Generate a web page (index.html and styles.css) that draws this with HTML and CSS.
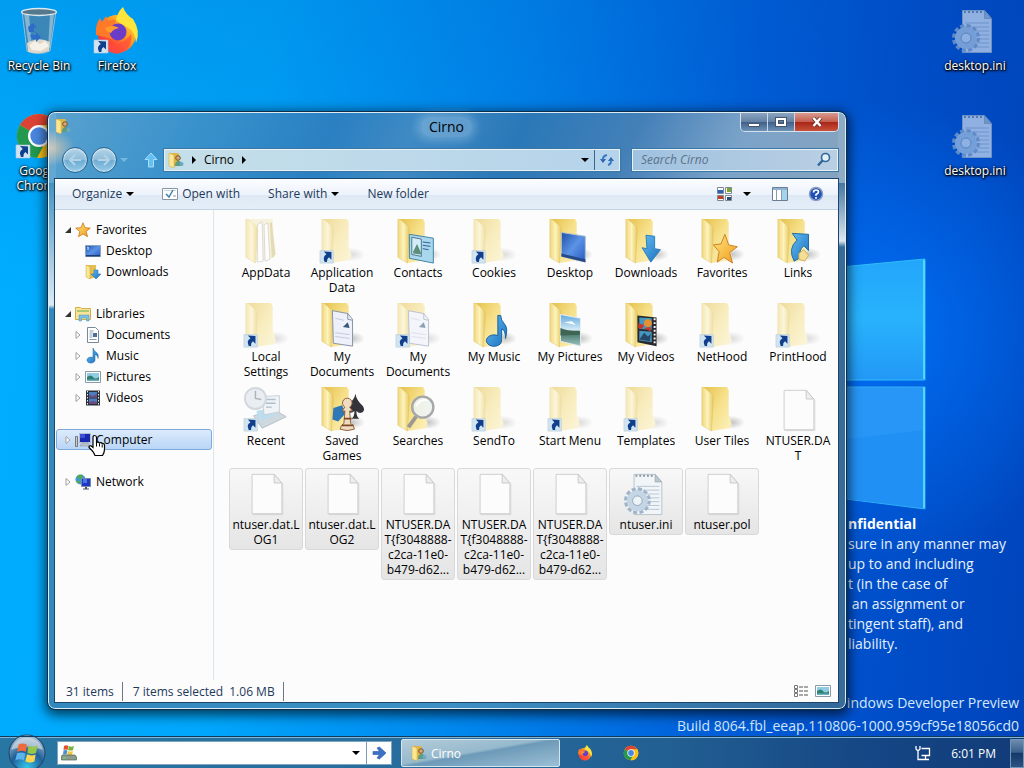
FILE: index.html
```html
<!DOCTYPE html>
<html lang="en">
<head>
    <meta charset="UTF-8">
    <meta name="viewport" content="width=device-width, initial-scale=1.0">
    <title>Cirno</title>
    <link rel="stylesheet" href="styles.css">
</head>
<body>
    <!-- Icon sprite -->
    <svg class="sprite" aria-hidden="true">
        <defs>
            <linearGradient id="flap" x1="0" y1="0" x2="1" y2="0">
                <stop offset="0" stop-color="#f0d67c"/><stop offset=".5" stop-color="#fdf3bd"/><stop offset="1" stop-color="#e6c75e"/>
            </linearGradient>
            <linearGradient id="back" x1="0" y1="0" x2="1" y2="1">
                <stop offset="0" stop-color="#e6c24e"/><stop offset=".5" stop-color="#f6e08a"/><stop offset="1" stop-color="#fbf0b8"/>
            </linearGradient>
            <linearGradient id="blue" x1="0" y1="0" x2="1" y2="1">
                <stop offset="0" stop-color="#63bdf0"/><stop offset="1" stop-color="#1a6fc0"/>
            </linearGradient>
            <linearGradient id="screen" x1="0" y1="0" x2="1" y2="1">
                <stop offset="0" stop-color="#1f4fa8"/><stop offset=".5" stop-color="#5b93e6"/><stop offset="1" stop-color="#2a5ac0"/>
            </linearGradient>
            <linearGradient id="gold" x1="0" y1="0" x2="1" y2="1">
                <stop offset="0" stop-color="#ffe680"/><stop offset="1" stop-color="#f09a1a"/>
            </linearGradient>
            <linearGradient id="sky" x1="0" y1="0" x2="0" y2="1">
                <stop offset="0" stop-color="#5fa8e0"/><stop offset=".5" stop-color="#d8ecf6"/><stop offset=".55" stop-color="#3f7060"/><stop offset="1" stop-color="#9cc4c4"/>
            </linearGradient>
            <linearGradient id="fox" x1="1" y1="0" x2="0" y2="1">
                <stop offset="0" stop-color="#fff04a"/><stop offset=".4" stop-color="#ff9a22"/><stop offset=".7" stop-color="#ff4434"/><stop offset="1" stop-color="#e01a70"/>
            </linearGradient>
            <radialGradient id="shade">
                <stop offset="0" stop-color="#888" stop-opacity=".5"/><stop offset="1" stop-color="#888" stop-opacity="0"/>
            </radialGradient>
            <radialGradient id="orb" cx=".5" cy=".9" r=".9">
                <stop offset="0" stop-color="#35c6e8"/><stop offset=".5" stop-color="#1f5f9a"/><stop offset="1" stop-color="#b8c8d4"/>
            </radialGradient>
        </defs>
        <symbol id="folder" viewBox="0 0 48 48">
            <ellipse cx="34" cy="37" rx="14" ry="7" fill="url(#shade)"/>
            <path d="M5 0h24l2 3v40l-18 3z" fill="url(#back)"/>
            <path d="M30 24l4 14-1 4-3 1z" fill="#faeeb4"/>
            <path d="M3 0h2l9 8 1 4-2 34-10-6z" fill="url(#flap)" stroke="#dcbf5c" stroke-width=".5"/>
        </symbol>
        <symbol id="folder-files" viewBox="0 0 48 48">
            <path d="M5 0h26l2 40-19 5z" fill="#f4eac2"/>
            <path d="M15 6l5-3 1 41-6 1zM22 6l4-2 2 38-5 2z" fill="#fff" stroke="#b4b0a4" stroke-width=".8"/>
            <path d="M28 4l2-1 4 34-4 4z" fill="#d2c078"/>
            <path d="M3 0h2l9 8 1 4-2 34-10-6z" fill="url(#flap)" stroke="#d8b850" stroke-width=".5"/>
        </symbol>
        <symbol id="shortcut" viewBox="0 0 48 48">
            <path d="M1 33h14v13H1z" fill="#d0e4f2" stroke="#b4c8d6" stroke-width=".6"/>
            <path d="M5 34l8 .5v8l-2.600-2.600q-2.400 1.600-2 5H6q-2.800-5.500 1.800-8z" fill="#123f8c"/>
        </symbol>
        <symbol id="page" viewBox="0 0 48 48">
            <path d="M9.500 3.500h23l8 9v32h-31z" fill="#fcfcfc" stroke="#cecece"/>
            <path d="M32.500 3.500v9h8z" fill="#eee" stroke="#c8c8c8"/>
            <path d="M10 45.500h31.500V13" fill="none" stroke="#d4d4d4"/>
        </symbol>
        <symbol id="ini" viewBox="0 0 48 48">
            <path d="M11.500 3.500h22l7 8v34h-29z" fill="#f1f5f8" stroke="#b8c2ca"/>
            <path d="M33.500 3.500v8h7z" fill="#b9c7cf" stroke="#8f9fa8" stroke-width=".6"/>
            <path d="M14 16h24M14 20h24M14 24h24M14 28h24M14 32h24M14 36h24M14 40h24" stroke="#b6c6d4"/>
            <path d="M13 5h18" stroke="#8b98a2" stroke-width="2" stroke-dasharray="2 2"/>
            <circle cx="15" cy="31" r="12" fill="none" stroke="#9fb4c8" stroke-width="4" stroke-dasharray="4 2.300"/>
            <circle cx="15" cy="31" r="8" fill="#dbe7f1" stroke="#c4d6e6" stroke-width="6"/>
            <circle cx="15" cy="31" r="5" fill="#edf3f7" stroke="#8fa6bb"/>
        </symbol>
        <symbol id="star" viewBox="0 0 16 16">
            <path d="M8 .8l2 4.900 5.300.4-4.100 3.400 1.300 5.200L8 11.900l-4.500 2.800 1.300-5.200L.7 6.100 6 5.700z" fill="url(#gold)" stroke="#c9761a" stroke-width=".8"/>
        </symbol>
        <symbol id="note" viewBox="0 0 16 16">
            <path d="M8 0q1 3 3.500 4.500T13 10.500q.5-3-3-4V12a4 3 0 1 1-2-2.500z" fill="url(#blue)" stroke="#16609e" stroke-width=".5"/>
        </symbol>
        <symbol id="monitor" viewBox="0 0 16 16">
            <path d="M.5 2.500h15v11H.5z" fill="url(#screen)" stroke="#8ba3bd"/>
            <path d="M1 12h14v1.500H1z" fill="#1c3c78"/>
            <path d="M2 4l2 1M2 6h2" stroke="#cfe0ff"/>
        </symbol>
        <symbol id="picture" viewBox="0 0 16 16">
            <path d="M.5 2.500h15v11H.5z" fill="#fff" stroke="#8d99a6"/>
            <path d="M2 4h12v8H2z" fill="#8fcde4"/>
            <path d="M2 8q4-3 6 0t6 0v4H2z" fill="#2f7f72"/>
            <path d="M2 10.500h12V12H2z" fill="#6bb0c0"/>
        </symbol>
        <symbol id="film" viewBox="0 0 16 16">
            <path d="M1 .5h14v15H1z" fill="#2b3138"/>
            <path d="M4 2h8v5.500H4zM4 8.500h8V14H4z" fill="#4d7fc0"/>
            <path d="M4 5l4 1 4-2v3.500H4zM4 12l4-1 4 1v2H4z" fill="#6a4a80"/>
            <path d="M2.500 1v14M13.500 1v14" stroke="#e8edf2" stroke-dasharray="1.500 1.500"/>
        </symbol>
        <symbol id="user-folder" viewBox="0 0 16 16">
            <path d="M1 1h9l1 1v11l-6 2z" fill="#dcb649"/>
            <path d="M1 1l5 2v13l-5-2z" fill="#fbe793" stroke="#c9a53c" stroke-width=".5"/>
            <circle cx="10" cy="6" r="2.300" fill="#d9a878" stroke="#7a5426"/>
            <path d="M7 14q0-5 3.500-5t4 5z" fill="#5c9c80"/>
            <circle cx="13.500" cy="12" r="2" fill="#6aabc8"/>
        </symbol>
        <symbol id="firefox" viewBox="0 0 48 48">
            <circle cx="24" cy="27" r="19" fill="url(#fox)"/>
            <path d="M3 28Q2 18 7 11l2 4 4-6 2 5q4-2 8-1l-2 7 5 3-7 9z" fill="#ff7a28"/>
            <path d="M30 0q3 8 10 12 8 12 3 24-1-12-9-16t-11-7q2-9 7-13z" fill="#fde53c"/>
            <path d="M6 30q8 10 18 7t14-10q2 12-8 18T8 38z" fill="#ff4d3d" opacity=".7"/>
            <circle cx="25" cy="25" r="8.500" fill="#6a3cc8"/>
            <path d="M12 21q8-4 14 0-6 1-8 5-5-1-6-5z" fill="#ff9a2e"/>
        </symbol>
        <symbol id="chrome" viewBox="0 0 48 48">
            <circle cx="24" cy="24" r="22" fill="#fbc116"/>
            <path d="M24 24L4.900 13A22 22 0 0 1 43 13z" fill="#dd4334"/>
            <path d="M24 24L4.900 13A22 22 0 0 0 22 46l9-17z" fill="#22994f"/>
            <path d="M24 13h19.100A22 22 0 0 1 24 46l9.500-16.500z" fill="#fbc116"/>
            <circle cx="24" cy="24" r="11" fill="#fff"/>
            <circle cx="24" cy="24" r="8.700" fill="#4a86e0"/>
        </symbol>
        <symbol id="bin" viewBox="0 0 48 48">
            <path d="M7 4l5 40q12 5 23 0l6-40z" fill="#4583ad" fill-opacity=".85" stroke="#a9cbe0" stroke-width=".8"/>
            <path d="M9 6l5 36 3 1-3-36zM35 7l-2 35 2-1 4-34z" fill="#b7d5e6" opacity=".6"/>
            <path d="M12 36q12-7 23-1l-1 9q-10 4-21 1z" fill="#ddd6ca"/>
            <path d="M14 38l6-4 5 3 5-3 4 5-8 5-9-1z" fill="#f6f1e8"/>
            <path d="M13 20l5-4 4 5-3-1v5h-5zM15 28h6v-3l5 5-5 5v-3h-4z" fill="#2e6cc8"/>
            <ellipse cx="24" cy="5" rx="17.500" ry="3.500" fill="#56788c" stroke="#dce9ef" stroke-width="1.300"/>
        </symbol>
    </svg>

    <main class="desktop">
        <svg class="logo" viewBox="0 0 100 270" aria-hidden="true">
            <defs>
                <linearGradient id="pane" x1="0" y1="0" x2="0" y2="1">
                    <stop offset="0" stop-color="#22a6fb"/><stop offset=".5" stop-color="#28b2fc"/><stop offset="1" stop-color="#2298f6"/>
                </linearGradient>
            </defs>
            <path d="M0 22l95-9v121H0z" fill="url(#pane)" stroke="#30bdfb"/>
            <path d="M0 141h95v122l-95-12z" fill="#2896f6" stroke="#30b0f8"/>
            <path d="M0 195l94-11v78l-94-11z" fill="#2190f4"/>
            <path d="M94 14v119M94 141v121" stroke="#50d8fc" stroke-width="2"/>
        </svg>

        <div class="shortcut recycle"><svg><use href="#bin"/></svg><span>Recycle Bin</span></div>
        <div class="shortcut firefox"><svg><use href="#firefox"/><use href="#shortcut"/></svg><span>Firefox</span></div>
        <div class="shortcut chrome"><svg><use href="#chrome"/><use href="#shortcut"/></svg><span>Google<br>Chrome</span></div>
        <div class="shortcut ini-top ghost"><svg><use href="#ini"/></svg><span>desktop.ini</span></div>
        <div class="shortcut ini-bottom ghost"><svg><use href="#ini"/></svg><span>desktop.ini</span></div>

        <div class="notice">
            <strong>nfidential</strong><br>
            sure in any manner may<br>
            up to and including<br>
            t (in the case of<br>
            &nbsp;an assignment or<br>
            tingent staff), and<br>
            liability.
        </div>
        <div class="build">Windows Developer Preview<br>Build 8064.fbl_eeap.110806-1000.959cf95e18056cd0</div>

        <section class="window">
            <header class="titlebar">
                <svg class="icon"><use href="#user-folder"/></svg>
                <h1>Cirno</h1>
                <div class="caption">
                    <button type="button" aria-label="Minimize"><svg viewBox="0 0 16 14"><path d="M2.500 8.500h11v3h-11z" fill="#fff" stroke="#45566e"/></svg></button>
                    <button type="button" aria-label="Maximize"><svg viewBox="0 0 16 14"><path d="M4 4h8v6H4z" fill="none" stroke="#45566e" stroke-width="4"/><path d="M4 4h8v6H4z" fill="none" stroke="#fff" stroke-width="2"/></svg></button>
                    <button type="button" class="close" aria-label="Close"><svg viewBox="0 0 16 14"><path d="M4.500 3l7 8M11.500 3l-7 8" stroke="#6b2a2a" stroke-width="4"/><path d="M4.500 3l7 8M11.500 3l-7 8" stroke="#fff" stroke-width="2.500"/></svg></button>
                </div>
            </header>

            <nav class="navbar">
                <div class="travel">
                    <button type="button" class="round" aria-label="Back"><svg viewBox="0 0 16 16"><path d="M14 8H3M8 3L3 8l5 5" fill="none" stroke="#b4d3e6" stroke-width="2"/></svg></button>
                    <button type="button" class="round" aria-label="Forward"><svg viewBox="0 0 16 16"><path d="M2 8h11M8 3l5 5-5 5" fill="none" stroke="#b4d3e6" stroke-width="2"/></svg></button>
                    <button type="button" class="plain" aria-label="Recent pages"><svg class="tiny" viewBox="0 0 8 8"><path d="M0 2h8L4 6z" fill="#79b7de"/></svg></button>
                </div>
                <button type="button" class="plain up" aria-label="Up"><svg viewBox="0 0 16 16"><path d="M8 1l6 6.500h-3.500V15h-5V7.500H2z" fill="#62c0f2" stroke="#a9def8"/></svg></button>
                <div class="address">
                    <svg class="icon"><use href="#user-folder"/></svg>
                    <svg class="tiny" viewBox="0 0 8 8"><path d="M2 0l4 4-4 4z"/></svg>
                    <a href="#cirno">Cirno</a>
                    <svg class="tiny" viewBox="0 0 8 8"><path d="M2 0l4 4-4 4z"/></svg>
                    <button type="button" class="plain drop" aria-label="Previous locations"><svg class="tiny" viewBox="0 0 8 8"><path d="M0 2h8L4 6z"/></svg></button>
                    <button type="button" class="plain refresh" aria-label="Refresh"><svg class="icon" viewBox="0 0 16 16"><path d="M1 7h6L4 11zM9 9h6l-3-4z" fill="#2a62b0"/><path d="M4 8q-.5-4 4-5M12 8q.5 4-3 5" fill="none" stroke="#3d7ac4" stroke-width="2"/></svg></button>
                </div>
                <div class="search">
                    <input type="text" aria-label="Search Cirno" placeholder="Search Cirno">
                    <svg class="icon" viewBox="0 0 16 16"><circle cx="9.500" cy="5.500" r="4" fill="#e3f2fa" stroke="#31679a" stroke-width="1.600"/><path d="M6.500 8.500L2 13.500" stroke="#31679a" stroke-width="2.400"/></svg>
                </div>
            </nav>

            <div class="client">
                <div class="toolbar">
                    <button type="button">Organize <svg class="tiny" viewBox="0 0 8 8"><path d="M0 2h8L4 6z"/></svg></button>
                    <button type="button"><svg class="icon" viewBox="0 0 16 16"><path d="M.5 2.500h15v11H.5z" fill="#fff" stroke="#8795a5"/><path d="M2 4.500h12" stroke="#cdd6df"/><path d="M4 8l3 3 4-7" fill="none" stroke="#3f80a8" stroke-width="1.500"/><path d="M11 10h3" stroke="#8795a5"/></svg> Open with</button>
                    <button type="button">Share with <svg class="tiny" viewBox="0 0 8 8"><path d="M0 2h8L4 6z"/></svg></button>
                    <button type="button">New folder</button>
                    <span class="spacer"></span>
                    <button type="button" class="views" aria-label="Change your view"><svg class="icon" viewBox="0 0 16 16"><g fill="#fff" stroke="#7d8894"><path d="M.5 1.500h6v6h-6zM8.500 1.500h6v6h-6zM.5 9.500h6v5h-6zM8.500 9.500h6v5h-6z"/></g><path d="M1 4h5v3H1z" fill="#2864b8"/><path d="M10 2h4v4h-4z" fill="#7ba62e"/><path d="M1 10h5v3H1z" fill="#c63c1e"/><path d="M10 11h4v3h-4z" fill="#304a70"/></svg><svg class="tiny" viewBox="0 0 8 8"><path d="M0 2h8L4 6z"/></svg></button>
                    <button type="button" aria-label="Show the preview pane"><svg class="icon" viewBox="0 0 16 16"><path d="M.5 1.500h15v13H.5z" fill="#fff" stroke="#6d7d90"/><path d="M1 2h14v2H1z" fill="#8fb2d8"/><path d="M9 4h6v10H9z" fill="#a4d3ee"/><path d="M4.500 4v10M9.500 4v10" stroke="#8d9cae"/></svg></button>
                    <button type="button" aria-label="Get help"><svg class="icon" viewBox="0 0 16 16"><circle cx="8" cy="8" r="6.500" fill="#1e50b8" stroke="#8b9fc4" stroke-width="1.500"/><path d="M5.500 6.500q0-2.500 2.500-2.500t2.500 2q0 1.300-2.500 2.500v1.200M8 11v1.800" fill="none" stroke="#fff" stroke-width="1.700"/></svg></button>
                </div>

                <div class="body">
                    <aside class="tree">
                        <ul>
                            <li><a href="#favorites"><svg class="tiny" viewBox="0 0 8 8"><path d="M7 1v6H1z" fill="#333"/></svg><svg class="icon"><use href="#star"/></svg>Favorites</a></li>
                            <li class="leaf"><a href="#desktop"><svg class="icon"><use href="#monitor"/></svg>Desktop</a></li>
                            <li class="leaf"><a href="#downloads"><svg class="icon" viewBox="0 0 16 16"><path d="M1 1h10v12l-6 2z" fill="#e2bf52"/><path d="M1 1l4 2v12l-4-2z" fill="#fbe793" stroke="#c9a53c" stroke-width=".5"/><path d="M9 6h4v4h3l-5 5-5-5h3z" fill="url(#blue)" stroke="#1e6cb0" stroke-width=".5"/></svg>Downloads</a></li>
                        </ul>
                        <ul>
                            <li><a href="#libraries"><svg class="tiny" viewBox="0 0 8 8"><path d="M7 1v6H1z" fill="#333"/></svg><svg class="icon" viewBox="0 0 16 16"><path d="M.5 1.500h5l1 1h9v11H.5z" fill="#fae596" stroke="#d1ae4c"/><path d="M2 5h12" stroke="#8ebf6a" stroke-width="1.500"/><path d="M4 15V9h10v6h-2.500v-3h-5v3z" fill="#7fc0e4" stroke="#4a93c0" stroke-width=".5"/></svg>Libraries</a></li>
                            <li class="child"><a href="#documents"><svg class="tiny" viewBox="0 0 8 8"><path d="M2 .5l4 3.500-4 3.500z" fill="#fff" stroke="#a0a0a0"/></svg><svg class="icon" viewBox="0 0 16 16"><path d="M2.500.5h8l3 3v12h-11z" fill="#fff" stroke="#78899b"/><path d="M4.500 4h4M4.500 6h3M4.500 8h3M4.500 10h3M4.500 12.500h7" stroke="#8a9aac"/><path d="M8 6h4v4H8z" fill="#4a7098"/></svg>Documents</a></li>
                            <li class="child"><a href="#music"><svg class="tiny" viewBox="0 0 8 8"><path d="M2 .5l4 3.500-4 3.500z" fill="#fff" stroke="#a0a0a0"/></svg><svg class="icon"><use href="#note"/></svg>Music</a></li>
                            <li class="child"><a href="#pictures"><svg class="tiny" viewBox="0 0 8 8"><path d="M2 .5l4 3.500-4 3.500z" fill="#fff" stroke="#a0a0a0"/></svg><svg class="icon"><use href="#picture"/></svg>Pictures</a></li>
                            <li class="child"><a href="#videos"><svg class="tiny" viewBox="0 0 8 8"><path d="M2 .5l4 3.500-4 3.500z" fill="#fff" stroke="#a0a0a0"/></svg><svg class="icon"><use href="#film"/></svg>Videos</a></li>
                        </ul>
                        <ul>
                            <li><a href="#computer" class="hover"><svg class="tiny" viewBox="0 0 8 8"><path d="M2 .5l4 3.500-4 3.500z" fill="#fff" stroke="#a0a0a0"/></svg><svg class="icon" viewBox="0 0 16 16"><path d="M.5 4.500h2v10h-2z" fill="#ccc" stroke="#777"/><path d="M4.500 1.500h11v9h-11z" fill="#1a28b0" stroke="#b4bfd0"/><path d="M5 2h5v4H5z" fill="#3e50d8"/><path d="M7 11h6l2 3H5z" fill="#bcc4cc" stroke="#7d8894" stroke-width=".5"/></svg>Computer</a></li>
                        </ul>
                        <ul>
                            <li><a href="#network"><svg class="tiny" viewBox="0 0 8 8"><path d="M2 .5l4 3.500-4 3.500z" fill="#fff" stroke="#a0a0a0"/></svg><svg class="icon" viewBox="0 0 16 16"><circle cx="5.500" cy="5.500" r="5" fill="#3d9ad0"/><path d="M2 2q3-2 6-1L6 5 3 4zM1 7l4 0-1 3z" fill="#58a846"/><path d="M6.500 4.500h9v8h-9z" fill="#1c38c0" stroke="#7688a8"/><path d="M8 5h4v4H8z" fill="#4f74e4"/><path d="M10 13h2v1.500h2v1H8v-1h2z" fill="#48566c"/></svg>Network</a></li>
                        </ul>
                    </aside>

                    <ul class="files">
                        <li class="ghost"><svg><use href="#folder-files"/></svg><span>AppData</span></li>
                        <li class="ghost"><svg><use href="#folder"/></svg><svg class="badge"><use href="#shortcut"/></svg><span>Application<br>Data</span></li>
                        <li><svg viewBox="0 0 48 48"><use href="#folder"/><path d="M15 16l25 4v26l-25-5z" fill="#a9d7ee" stroke="#3f7fa4"/><path d="M17.500 19l10 2v18l-10-2z" fill="#d3edf7" stroke="#4b748c"/><path d="M19 34l4-8 4 9v2l-8-1z" fill="#5c8f7a"/><path d="M29 24l8 1M29 27.500l8 1M29 31l6 1" stroke="#2e5a8c"/></svg><span>Contacts</span></li>
                        <li class="ghost"><svg><use href="#folder"/></svg><svg class="badge"><use href="#shortcut"/></svg><span>Cookies</span></li>
                        <li><svg viewBox="0 0 48 48"><use href="#folder"/><path d="M15 14l25 4v27l-25-6z" fill="url(#screen)" stroke="#b2c0d2"/><path d="M15 36l25 6v3l-25-6z" fill="#274a86"/></svg><span>Desktop</span></li>
                        <li><svg viewBox="0 0 48 48"><use href="#folder"/><path d="M24 17l9 1v13l6 1-10 13-9-15 5 1z" fill="url(#blue)" stroke="#2c7cba"/></svg><span>Downloads</span></li>
                        <li><svg viewBox="0 0 48 48"><use href="#folder"/><path d="M27 16l4 11 9 2-8 6 3 11-9-6-7 5 2-11-6-7 8-1z" fill="url(#gold)" stroke="#c97f28"/></svg><span>Favorites</span></li>
                        <li><svg viewBox="0 0 48 48"><use href="#folder"/><path d="M18 15l17 1v17l-5-5q-6 5-3 12l-7 4q-7-13 3-22z" fill="url(#blue)" stroke="#1e6a9e"/><path d="M25 36l5-4 5 6-4 6-6-2z" fill="#f4df94" stroke="#cfae52"/></svg><span>Links</span></li>

                        <li class="ghost"><svg><use href="#folder"/></svg><svg class="badge"><use href="#shortcut"/></svg><span>Local<br>Settings</span></li>
                        <li><svg viewBox="0 0 48 48"><use href="#folder"/><path d="M14 8l16 3 5 6v28l-20-3z" fill="#eef0fa" stroke="#8590a8"/><path d="M30 11v6l5 1" fill="none" stroke="#8590a8"/><path d="M25 25l5-5 2 6z" fill="#34587e"/><path d="M17 16l9 2M17 31l15 2M17 35l15 2" stroke="#c3c8dc"/></svg><span>My<br>Documents</span></li>
                        <li class="ghost"><svg viewBox="0 0 48 48"><use href="#folder"/><path d="M14 8l16 3 5 6v28l-20-3z" fill="#eef0fa" stroke="#8590a8"/><path d="M30 11v6l5 1" fill="none" stroke="#8590a8"/><path d="M25 25l5-5 2 6z" fill="#34587e"/><path d="M17 16l9 2M17 31l15 2M17 35l15 2" stroke="#c3c8dc"/></svg><svg class="badge"><use href="#shortcut"/></svg><span>My<br>Documents</span></li>
                        <li><svg viewBox="0 0 48 48"><use href="#folder"/><path d="M28 13h3q0 5 4 9t1 15q0-9-4-10v13a8 6 0 1 1-4-6z" fill="url(#blue)" stroke="#16609e"/></svg><span>My Music</span></li>
                        <li><svg viewBox="0 0 48 48"><use href="#folder"/><path d="M14 12l21 4v29l-21-5z" fill="url(#sky)" stroke="#e8eef2"/><path d="M14 26q6 3 20 3v4l-20 1z" fill="#3f6654"/><path d="M18 20l8-1 4 4z" fill="#fff"/></svg><span>My Pictures</span></li>
                        <li><svg viewBox="0 0 48 48"><use href="#folder"/><path d="M15 13l20 2v30l-20-4z" fill="#27292c"/><path d="M17 15l13 1v12l-13-1zM17 29l13 1v11l-13-2z" fill="#4597c0"/><circle cx="26" cy="21" r="4" fill="#e8902e"/><path d="M16 21l6 2-2 4-4-1zM22 26l7-1v5z" fill="#c8352a"/><path d="M17 38l5-7 4 4 3-3-1 8z" fill="#284868"/><path d="M33 16v27" stroke="#fff" stroke-width="2" stroke-dasharray="2 2"/></svg><span>My Videos</span></li>
                        <li class="ghost"><svg><use href="#folder"/></svg><svg class="badge"><use href="#shortcut"/></svg><span>NetHood</span></li>
                        <li class="ghost"><svg><use href="#folder"/></svg><svg class="badge"><use href="#shortcut"/></svg><span>PrintHood</span></li>

                        <li class="ghost"><svg viewBox="0 0 48 48"><path d="M11 30l22-6 12 7-25 12z" fill="#a9bcc8" stroke="#7c8d99"/><path d="M14 25l16-3 4 8-17 5z" fill="#86c5e4"/><path d="M20 10l18-1v17l-16 3z" fill="#e8eff4" stroke="#9aabb8"/><path d="M24 13h10M24 17h10M24 21h6" stroke="#6b8ea8" stroke-width="1.500"/><circle cx="13" cy="12" r="11" fill="#dce3ea" stroke="#b0bcc6" stroke-width="2"/><path d="M13 4v8l6 1" fill="none" stroke="#6b7886" stroke-width="1.500"/></svg><svg class="badge"><use href="#shortcut"/></svg><span>Recent</span></li>
                        <li><svg viewBox="0 0 48 48"><use href="#folder"/><path d="M15 22l9-3 4 8-8 9-6-2z" fill="#2e78b8"/><path d="M38 7q1 7 8 13 3 6-3 7-2 0-4-2 0 6 3 8h-8q3-2 3-8-3 3-7 1-3-3 1-8 6-5 7-11z" fill="#33343a"/><path d="M22 44q1-5 4-6l1-13h-3l3-4a5 5 0 1 1 5 0l3 4h-3l1 13q3 1 4 6-8 3-15 0z" fill="#f0dcc0" stroke="#8c5f36"/><path d="M26 33h8M24 40h12" stroke="#7a4a28" stroke-width="2"/></svg><span>Saved<br>Games</span></li>
                        <li><svg viewBox="0 0 48 48"><use href="#folder"/><path d="M22 31l-8 11" stroke="#9c9a90" stroke-width="4"/><circle cx="29" cy="21" r="11" fill="#edf3ef" fill-opacity=".9" stroke="#a5a7a8" stroke-width="2.500"/><path d="M22 20q4-8 12-6" fill="none" stroke="#fff" stroke-width="2"/></svg><span>Searches</span></li>
                        <li class="ghost"><svg><use href="#folder"/></svg><svg class="badge"><use href="#shortcut"/></svg><span>SendTo</span></li>
                        <li class="ghost"><svg><use href="#folder"/></svg><svg class="badge"><use href="#shortcut"/></svg><span>Start Menu</span></li>
                        <li class="ghost"><svg><use href="#folder"/></svg><svg class="badge"><use href="#shortcut"/></svg><span>Templates</span></li>
                        <li><svg><use href="#folder"/></svg><span>User Tiles</span></li>
                        <li><svg><use href="#page"/></svg><span>NTUSER.DA<br>T</span></li>

                        <li class="selected"><svg><use href="#page"/></svg><span>ntuser.dat.L<br>OG1</span></li>
                        <li class="selected"><svg><use href="#page"/></svg><span>ntuser.dat.L<br>OG2</span></li>
                        <li class="selected"><svg><use href="#page"/></svg><span>NTUSER.DA<br>T{f3048888-<br>c2ca-11e0-<br>b479-d62...</span></li>
                        <li class="selected"><svg><use href="#page"/></svg><span>NTUSER.DA<br>T{f3048888-<br>c2ca-11e0-<br>b479-d62...</span></li>
                        <li class="selected"><svg><use href="#page"/></svg><span>NTUSER.DA<br>T{f3048888-<br>c2ca-11e0-<br>b479-d62...</span></li>
                        <li class="selected"><svg><use href="#ini"/></svg><span>ntuser.ini</span></li>
                        <li class="selected"><svg><use href="#page"/></svg><span>ntuser.pol</span></li>
                    </ul>
                </div>

                <footer class="status">
                    <span class="cell">31 items</span>
                    <span class="cell">7 items selected&nbsp; 1.06 MB</span>
                    <span class="spacer"></span>
                    <button type="button" class="plain" aria-label="Details view"><svg class="icon" viewBox="0 0 16 16"><path d="M1.500 2.500h3v3h-3zM1.500 6.500h3v3h-3zM1.500 10.500h3v3h-3z" fill="#fff" stroke="#777"/><path d="M6 4h4M11 4h4M6 8h4M11 8h4M6 12h4M11 12h4" stroke="#555"/></svg></button>
                    <button type="button" class="plain" aria-label="Large icons view"><svg class="icon"><use href="#picture"/></svg></button>
                </footer>
            </div>
        </section>

        <svg class="cursor" viewBox="0 0 18 22" aria-hidden="true"><path d="M5 13V3q0-2 1.700-2T8.500 3v5q2-1 3 .5 2-.8 2.800.6 2-.4 2.200 1.600V15q0 3-2 6H7q-1-3-3-5l-3-3q0-2 2-1.700z" fill="#fff" stroke="#000" stroke-width="1.200"/><path d="M8.500 8v4M11.500 9v3M14.200 10v3" stroke="#000"/></svg>
    </main>

    <footer class="taskbar">
        <button type="button" class="start" aria-label="Start"><svg viewBox="0 0 36 36"><circle cx="18" cy="18" r="17" fill="url(#orb)" stroke="#204a70"/><path d="M3 15A15.500 15.500 0 0 1 33 15q-15-6-30 0z" fill="#dfe8ee" opacity=".6"/><path d="M10 10q4-2 8 .3L16.800 17q-4-2-8-.3z" fill="#ee6a3a"/><path d="M19.500 11q4 2 8.500 0l-1.500 7q-4 2-8.200-.3z" fill="#96c848"/><path d="M8.500 18.300q4-1.800 8 .2L15 25q-4-2-8-.2z" fill="#5cb4ee"/><path d="M18 19.200q4 2 8.200.2L25 26q-4.500 2-8.500-.2z" fill="#ffd450"/></svg></button>
        <div class="runbox">
            <svg class="icon" viewBox="0 0 16 16"><path d="M3 1q2-1.500 4.500 0l-1 4q-2-1-4 0z" fill="#e0522c"/><path d="M8 1q2 1.500 5 0l-1 4q-2 1-5 0z" fill="#78b43c"/><path d="M2.500 5.500q2-1 4 0l-1 4H2z" fill="#4690d4"/><path d="M7 6q2 1 5 0l-1 4H6z" fill="#f4c63c"/><path d="M1 10h13l1.500 2v3H.5v-3z" fill="#8d9a8c" stroke="#4f6a5c" stroke-width=".7"/><path d="M2 13h3" stroke="#6be06b"/></svg>
            <input type="text" aria-label="Address">
            <button type="button" class="plain" aria-label="Show history"><svg class="tiny" viewBox="0 0 8 8"><path d="M0 2h8L4 6z"/></svg></button>
            <button type="button" class="plain go" aria-label="Go"><svg class="icon" viewBox="0 0 16 16"><path d="M2 6.500h6.500L6 3l2.500-1L15 8l-6.500 6L6 13l2.500-3.500H2z" fill="#3a72c8" stroke="#2a56a0" stroke-width=".6"/></svg></button>
        </div>
        <button type="button" class="task"><svg class="icon"><use href="#user-folder"/></svg>Cirno</button>
        <button type="button" class="plain pin" aria-label="Firefox"><svg class="icon"><use href="#firefox"/></svg></button>
        <button type="button" class="plain pin" aria-label="Google Chrome"><svg class="icon"><use href="#chrome"/></svg></button>
        <span class="spacer"></span>
        <svg class="icon" viewBox="0 0 16 16"><path d="M6.500 3.500h8v7h-8M10.500 11v3M7 14.500h7M3 6.500v8h4" fill="none" stroke="#fff" stroke-width="1.300"/><path d="M1 1v3l2 2 2-2V1" fill="none" stroke="#fff" stroke-width="1.300"/></svg>
        <time>6:01 PM</time>
        <button type="button" class="peek" aria-label="Show desktop"></button>
    </footer>
</body>
</html>
```
FILE: styles.css
```css
* {
    box-sizing: border-box;
}
body {
    margin: 0;
    height: 100vh;
    display: flex;
    flex-direction: column;
    overflow: hidden;
    font-family: "Open Sans", "Noto Sans", sans-serif;
    font-size: 12px;
    line-height: 15px;
    color: #000;
}
button, input {
    font: inherit;
    color: inherit;
    padding: 0;
    margin: 0;
    border: 0;
    background: none;
}
button {
    display: flex;
    align-items: center;
    justify-content: center;
}
ul {
    list-style: none;
    margin: 0;
    padding: 0;
}
a {
    color: inherit;
    text-decoration: none;
}
svg {
    flex: none;
}
.sprite {
    position: absolute;
    width: 0;
    height: 0;
}
.icon {
    width: 16px;
    height: 16px;
}
.tiny {
    width: 8px;
    height: 8px;
}
.spacer {
    flex: 1;
}

/* Desktop */
.desktop {
    position: relative;
    flex: 1;
    overflow: hidden;
    background:
        radial-gradient(circle at 86% 45%, rgba(0, 120, 255, 0.75) 0, rgba(0, 100, 255, 0) 230px),
        linear-gradient(180deg, rgba(0, 60, 160, 0.15) 0, rgba(0, 60, 160, 0) 40%),
        linear-gradient(95deg, #00aeff 0, #00a6fb 25%, #0084ec 50%, #0060da 70%, #0050cc 84%, #0044bb 100%);
}
.logo {
    position: absolute;
    left: 830px;
    top: 246px;
    width: 100px;
    height: 270px;
}
.shortcut {
    position: absolute;
    width: 76px;
    text-align: center;
    color: #fff;
    text-shadow: 1px 1px 2px #000, 0 1px 2px #000, 0 0 3px #000;
}
.shortcut svg {
    display: block;
    width: 48px;
    height: 48px;
    margin: 0 auto 3px;
}
.shortcut.ghost svg {
    opacity: 0.6;
}
.recycle {
    left: 1px;
    top: 7px;
}
.firefox {
    left: 79px;
    top: 7px;
}
.chrome {
    left: 1px;
    top: 112px;
}
.ini-top {
    right: 11px;
    top: 7px;
}
.ini-bottom {
    right: 11px;
    top: 112px;
}
.notice {
    position: absolute;
    left: 848px;
    top: 514px;
    font-size: 14px;
    line-height: 20px;
    color: #e6f1fb;
    white-space: nowrap;
}
.notice strong {
    color: #fff;
}
.build {
    position: absolute;
    right: 5px;
    bottom: 0;
    font-size: 14px;
    line-height: 23px;
    text-align: right;
    color: #d5e9fa;
    white-space: nowrap;
}

/* Explorer window */
.window {
    position: absolute;
    left: 48px;
    top: 112px;
    right: 178px;
    bottom: 28px;
    display: flex;
    flex-direction: column;
    padding: 0 6px 5px 5px;
    border: 1px solid #dcecf5;
    border-radius: 7px;
    outline: 1px solid #0d2f4c;
    box-shadow: 0 3px 12px 3px rgba(0, 0, 0, 0.65);
    background:
        linear-gradient(180deg, rgba(230, 240, 248, 0.1) 70px, rgba(240, 245, 250, 0.9) 192px, rgba(40, 140, 190, 0) 196px) left / 7px 100% no-repeat,
        linear-gradient(180deg, rgba(230, 240, 248, 0.1) 70px, rgba(240, 245, 250, 0.9) 128px, rgba(60, 110, 150, 0.6) 134px) right / 7px 100% no-repeat,
        radial-gradient(ellipse at 0 35px, rgba(240, 205, 170, 0.8) 0, rgba(200, 220, 230, 0) 26px),
        linear-gradient(115deg, #5aa2ce 0, #3a92cc 18%, #2a80c2 35%, #3f8ac4 45%, #2a78b8 58%, #4480b8 72%, #7ba3c9 85%, #86a3bf 100%) top / 100% 70px no-repeat,
        linear-gradient(90deg, #3189bd, #3c90c6 50%, #33689a);
}
.titlebar {
    display: grid;
    grid-template-columns: 1fr auto 1fr;
    align-items: start;
    height: 32px;
}
.titlebar > .icon {
    margin: 5px 0 0 1px;
}
.titlebar h1 {
    margin: 4px 0 0;
    padding: 0 8px;
    font-size: 14px;
    font-weight: normal;
    line-height: 20px;
    border-radius: 10px;
    background: rgba(200, 226, 244, 0.3);
    box-shadow: 0 0 8px 4px rgba(200, 226, 244, 0.3);
}
.caption {
    display: flex;
    justify-self: end;
    border: 1px solid #d5e2ec;
    border-top: 0;
    border-radius: 0 0 5px 5px;
    overflow: hidden;
}
.caption button {
    width: 27px;
    height: 18px;
    border-right: 1px solid #c8d8e6;
    background: linear-gradient(#8ba5c1 0, #6482a5 48%, #3f5f88 50%, #6e91b6 100%);
}
.caption svg {
    width: 16px;
    height: 14px;
}
.caption .close {
    width: 43px;
    border-right: 0;
    background: linear-gradient(#d99a90 0, #c4604f 48%, #a92418 50%, #c8513a 100%);
}
.navbar {
    display: flex;
    align-items: center;
    height: 33px;
    padding: 0 1px 4px 8px;
}
.travel {
    display: flex;
    gap: 3px;
    width: 79px;
    align-items: center;
}
.round {
    width: 26px;
    height: 26px;
    border: 1px solid #29648f;
    border-radius: 50%;
    background: linear-gradient(#b4d4e8 0, #8ebddb 48%, #6dabd2 50%, #93cae8 100%);
    box-shadow: inset 0 0 2px 1px rgba(255, 255, 255, 0.6);
}
.round svg, .up svg {
    width: 16px;
    height: 16px;
}
.up {
    width: 20px;
    margin-right: 3px;
}
.address, .search {
    display: flex;
    align-items: center;
    height: 22px;
    border: 1px solid #e6f1f8;
    outline: 1px solid #3b77a4;
    background: #b5d3e8;
}
.address {
    flex: 1;
    gap: 6px;
    padding-left: 3px;
    background: linear-gradient(90deg, #c5dfe9, #b5d3ea);
}
.drop {
    width: 16px;
    height: 20px;
    margin-left: auto;
}
.refresh {
    width: 25px;
    height: 20px;
    margin-left: -5px;
    border-left: 1px solid #38698f;
}
.search {
    flex: 0 0 206px;
    margin-left: 12px;
    padding: 0 5px 0 8px;
    background: linear-gradient(90deg, #a0c2e0, #b9cfe3);
}
.search input {
    flex: 1;
    min-width: 0;
    outline: 0;
}
.search input::placeholder {
    color: #5b7289;
    font-style: italic;
    opacity: 1;
}
.client {
    flex: 1;
    min-height: 0;
    display: flex;
    flex-direction: column;
    border: 1px solid #1b4669;
    background: #fcfcfc;
}
.toolbar {
    display: flex;
    align-items: center;
    flex: 0 0 31px;
    gap: 28px;
    padding: 0 14px 2px 17px;
    border-top: 1px solid #fff;
    border-bottom: 1px solid #c3d3e3;
    color: #1e395b;
    background: linear-gradient(#fafcff 0, #edf3fb 50%, #dfe9f5 52%, #e4eef8 100%);
}
.toolbar button {
    gap: 4px;
    white-space: nowrap;
}
.toolbar .views {
    gap: 10px;
    margin-right: -7px;
}
.toolbar button:last-child {
    margin-left: -8px;
}
.body {
    flex: 1;
    min-height: 0;
    display: flex;
}
.tree {
    flex: 0 0 159px;
    padding: 9px 1px 0;
    border-right: 1px solid #dde5ee;
}
.tree ul {
    margin-bottom: 21px;
}
.tree a {
    display: flex;
    align-items: center;
    gap: 3px;
    height: 21px;
    padding-left: 7px;
    border: 1px solid transparent;
    border-radius: 3px;
}
.tree .icon {
    margin-right: 2px;
}
.tree .child a {
    padding-left: 17px;
}
.tree .leaf a {
    padding-left: 28px;
}
.tree .hover {
    border-color: #7ea9da;
    background: linear-gradient(#dcebfc, #b9d5f6);
}
.files {
    flex: 1;
    display: grid;
    grid-template-columns: repeat(auto-fill, 74px);
    grid-auto-rows: minmax(82px, auto);
    align-content: start;
    align-items: start;
    gap: 2px;
    padding: 6px 0 0 15px;
}
.files li {
    display: grid;
    justify-items: center;
    padding: 2px 0;
    border: 1px solid transparent;
    border-radius: 3px;
    text-align: center;
    white-space: nowrap;
}
.files svg {
    grid-area: 1 / 1;
    width: 48px;
    height: 46px;
}
.files .ghost svg:first-child {
    opacity: 0.55;
}
.files .badge {
    z-index: 1;
}
.files .selected {
    border-color: #d9d9d9;
    background: linear-gradient(#f8f8f8, #e5e5e5);
}
.status {
    display: flex;
    align-items: center;
    flex: 0 0 22px;
    gap: 6px;
    padding: 0 7px 0 1px;
    color: #1e395b;
}
.status .cell {
    padding: 2px 8px 2px 10px;
    border-right: 1px solid #6d7884;
}
.status .cell + .cell {
    padding-left: 4px;
}
.cursor {
    position: absolute;
    left: 88px;
    top: 434px;
    width: 18px;
    height: 23px;
}

/* Taskbar */
.taskbar {
    position: relative;
    flex: 0 0 30px;
    display: flex;
    align-items: center;
    padding-left: 8px;
    border-top: 1px solid #7fb6d8;
    outline: 1px solid #123a5c;
    color: #fff;
    background: linear-gradient(90deg, #2876a2 0, #276c9c 40%, #225f92 65%, #154685 85%, #123c78 100%);
}
.start {
    width: 38px;
    height: 30px;
    margin-right: 11px;
}
.start svg {
    width: 38px;
    height: 38px;
}
.runbox {
    display: flex;
    align-items: center;
    flex: 0 1 335px;
    height: 24px;
    padding-left: 3px;
    border: 1px solid #7fa6c0;
    color: #000;
    background: #fff;
}
.runbox input {
    flex: 1;
    min-width: 0;
    outline: 0;
}
.runbox .plain {
    width: 20px;
    height: 22px;
}
.runbox .go {
    width: 25px;
    border-left: 1px solid #7f9db5;
}
.task {
    flex: 0 1 159px;
    height: 28px;
    margin: 0 17px 0 9px;
    padding-left: 9px;
    justify-content: flex-start;
    gap: 4px;
    border: 1px solid #d4e6f0;
    border-radius: 2px;
    background: linear-gradient(170deg, #b4ccd9 0, #96b9cd 45%, #6d9ab8 50%, #9cbfd6 100%);
}
.pin {
    width: 16px;
    margin-right: 30px;
}
.taskbar time {
    margin: 0 14px 0 20px;
}
.peek {
    width: 14px;
    height: 29px;
    border: 1px solid #7395b8;
    background: linear-gradient(#6d8cae 0, #3a608c 45%, #163a68 50%, #2a5284 100%);
}
```
